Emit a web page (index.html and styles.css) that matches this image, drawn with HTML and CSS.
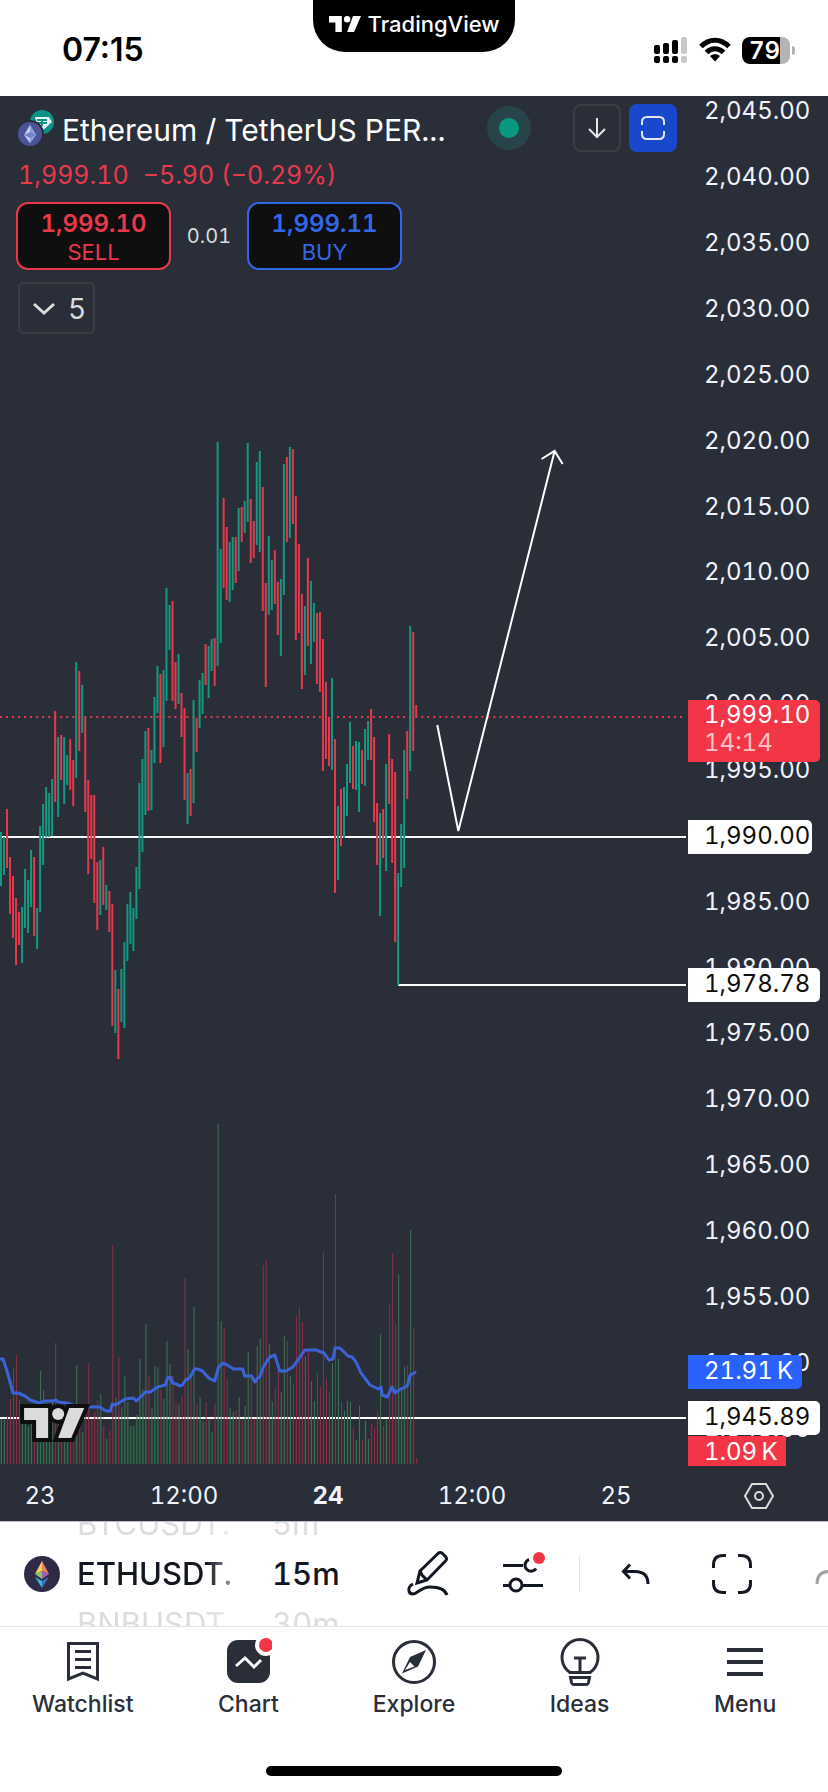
FILE: index.html
```html
<!DOCTYPE html>
<html lang="en">
<head>
    <meta charset="UTF-8">
    <meta name="viewport" content="width=device-width, initial-scale=1.0">
    <title>ETHUSDT Chart</title>
    <link rel="stylesheet" href="styles.css">
</head>
<body>

    <header class="status-bar">
        <span class="clock">07:15</span>
        <div class="island">
            <svg width="32" height="16" viewBox="0 0 60 30"><path d="M0 0h24v30H12V12H0zM45 0h15L47 30H34z"/><circle cx="34" cy="6" r="6"/></svg>
            <span>TradingView</span>
        </div>
        <div class="status-icons">
            <svg width="34" height="28" viewBox="0 0 34 28">
                <rect x="0" y="9" width="6" height="9" rx="2"/><rect x="9" y="7" width="6" height="11" rx="2"/><rect x="18" y="4" width="6" height="14" rx="2"/>
                <rect class="dim" x="27" y="1" width="6" height="17" rx="2"/>
                <rect x="0" y="20" width="6" height="7" rx="2"/><rect x="9" y="20" width="6" height="7" rx="2"/><rect x="18" y="20" width="6" height="7" rx="2"/>
                <rect class="dim" x="27" y="20" width="6" height="7" rx="2"/>
            </svg>
            <svg width="32" height="26" viewBox="0 0 32 26">
                <path class="wave" d="M2 9.500C10 1 22 1 30 9.500M7.500 15.500C12 10.500 20 10.500 24.500 15.500"/>
                <path d="M16 24.500l-5-5.500c3-2.500 7-2.500 10 0z"/>
            </svg>
            <div class="battery"><span>79</span></div>
        </div>
    </header>

    <main class="chart">
        <div class="plot">
            <svg class="plot-svg" viewBox="0 0 684 1370" preserveAspectRatio="none">
                <g class="levels">
                    <path d="M0 741H684M397 889H684M0 1322H684"/>
                </g>
                <g id="volume"></g>
                <polyline class="volume-ma" points="0,1263 3,1263 7,1275 13,1297 18,1297 25,1300 30,1304 39,1307 45,1305 53,1305 56,1304 58,1306 67,1307 72,1309 87,1311 99,1311 106,1315 110,1315 112,1308 115,1309 125,1303 133,1302 136,1305 145,1296 150,1296 157,1291 165,1289 167,1282 170,1281 172,1287 176,1288 179,1290 182,1289 185,1284 189,1282 194,1273 197,1273 202,1275 208,1282 214,1285 218,1271 223,1267 233,1273 242,1273 244,1280 251,1280 254,1286 257,1282 259,1281 263,1270 269,1261 274,1259 279,1275 285,1275 292,1271 295,1267 304,1254 315,1254 323,1257 328,1264 332,1263 334,1252 339,1252 347,1260 351,1261 355,1266 360,1277 369,1289 377,1293 380,1291 381,1299 386,1301 391,1291 394,1297 398,1294 406,1290 409,1279 415,1276"/>
                <path class="last-price" d="M0 621H684"/>
                <g id="bars"></g>
                <path class="arrow" d="M436 629L457 735L553 355M540 363L553 355L561 368"/>
                <g class="watermark">
                    <path class="halo" d="M24 1312h24v30H36v-18H24zM69 1312h15l-13 30H58z"/>
                    <circle class="halo" cx="58" cy="1318" r="6"/>
                    <path d="M24 1312h24v30H36v-18H24zM69 1312h15l-13 30H58z"/>
                    <circle cx="58" cy="1318" r="6"/>
                </g>
            </svg>

            <div class="legend">
                <div class="legend-row">
                    <svg width="38" height="38" viewBox="0 0 38 38">
                        <circle cx="24" cy="13" r="12" fill="#0b9388"/>
                        <path d="M17 8h14l3 5-10 9-4-4z" fill="#e6f5f3"/><path d="M19 11h10M24 11v6M19 14h10" stroke="#0b9388" stroke-width="2" fill="none"/>
                        <circle cx="12" cy="25" r="14" fill="#2a2e39"/>
                        <circle cx="12" cy="25" r="12" fill="#4a5597"/>
                        <path d="M12 16l-6 10 6 8 6-8z" fill="#c5cef2"/><path d="M12 16v18l6-8z" fill="#8e9bd8"/><path d="M6 26l6-3 6 3-6 3z" fill="#7583c9"/>
                    </svg>
                    <h1 class="symbol">Ethereum / TetherUS PER...</h1>
                    <span class="market-open"></span>
                    <button class="square-btn" aria-label="Scroll down">
                        <svg width="24" height="24" viewBox="0 0 24 24"><path d="M12 2v19M4 13l8 8 8-8"/></svg>
                    </button>
                    <button class="square-btn active" aria-label="Auto scale">
                        <svg width="24" height="24" viewBox="0 0 24 24"><path d="M1 9V6q0-5 5-5h12q5 0 5 5v3M1 15v3q0 5 5 5h12q5 0 5-5v-3"/></svg>
                    </button>
                </div>
                <div class="quote"><span>1,999.10</span><span>−5.90 (−0.29%)</span></div>
                <div class="trade">
                    <button class="sell"><b>1,999.10</b>SELL</button>
                    <span class="spread">0.01</span>
                    <button class="buy"><b>1,999.11</b>BUY</button>
                </div>
                <button class="indicators">
                    <svg width="24" height="14" viewBox="0 0 24 14"><path d="M2 2l10 9 10-9"/></svg>
                    5
                </button>
            </div>
        </div>

        <div class="price-axis">
            <ol class="prices" id="prices"></ol>
            <div class="tag last" data-y="604">1,999.10<br><span>14:14</span></div>
            <div class="tag narrow" data-y="724">1,990.00</div>
            <div class="tag" data-y="872">1,978.78</div>
            <div class="tag ma" data-y="1259">21.91&thinsp;K</div>
            <div class="tag" data-y="1305">1,945.89</div>
            <div class="tag vol" data-y="1340">1.09&thinsp;K</div>
        </div>

        <div class="time-axis">
            <span>23</span><span>12:00</span><span class="day">24</span><span>12:00</span><span>25</span>
        </div>
        <button class="axis-settings" aria-label="Chart settings">
            <svg width="30" height="26" viewBox="0 0 30 26"><path d="M8 1h14l7 12-7 12H8L1 13z"/><circle cx="15" cy="13" r="4"/></svg>
        </button>
    </main>

    <section class="toolbar">
        <svg class="coin" width="36" height="36" viewBox="0 0 36 36">
            <circle cx="18" cy="18" r="18" fill="#2f2b47"/>
            <path d="M18 5l-7 13 7-3z" fill="#f7cf5b"/><path d="M18 5l7 13-7-3z" fill="#ee7e61"/>
            <path d="M11 18l7-3v8z" fill="#8ac46c"/><path d="M25 18l-7-3v8z" fill="#a35fb4"/>
            <path d="M11 21l7 4v7z" fill="#35b6d6"/><path d="M25 21l-7 4v7z" fill="#3a6fc8"/>
        </svg>
        <div class="wheel symbols">
            <button>BTCUSDT.</button>
            <button class="current">ETHUSDT.</button>
            <button>BNBUSDT.</button>
        </div>
        <div class="wheel intervals">
            <button>5m</button>
            <button class="current">15m</button>
            <button>30m</button>
        </div>
        <div class="tools">
            <button aria-label="Drawings">
                <svg width="48" height="48" viewBox="0 0 48 48"><path d="M16 21L34 3.500q2-2 4.500 0l3 3q2 2.500 0 4.500L23 30l-10 3zM16 21l2 4 5 5M9 34c-6 3-5 10 0 10 4 0 8-7 17-7 8 0 15 2 17 8"/></svg>
            </button>
            <button aria-label="Indicators">
                <svg width="48" height="48" viewBox="0 0 48 48"><path d="M3 15.500h20M29 9.500a6 6 0 1 0 7 9M3 35.500h7M22 35.500h21"/><circle cx="16" cy="35" r="6"/><circle class="dot" cx="39" cy="8" r="6"/></svg>
            </button>
            <span class="divider"></span>
            <button aria-label="Undo">
                <svg width="48" height="48" viewBox="0 0 48 48"><path d="M18 14.500L11.500 21.500l6.500 7M12 21.500h11c8 0 13 4 13 12.500"/></svg>
            </button>
            <button aria-label="Full screen">
                <svg width="48" height="48" viewBox="0 0 48 48"><path d="M5.500 18v-3q0-9.500 9.500-9.500h3M30 5.500h3q9.500 0 9.500 9.500v3M42.500 30v3q0 9.500-9.500 9.500h-3M18 42.500h-3q-9.500 0-9.500-9.500v-3"/></svg>
            </button>
            <button class="redo" aria-label="Redo">
                <svg width="48" height="48" viewBox="0 0 48 48"><path d="M30 14.500l6.500 7-6.500 7M36 21.500H25c-8 0-12 4-12 12.500"/></svg>
            </button>
        </div>
    </section>

    <nav class="tabs">
        <a href="#watchlist">
            <svg width="48" height="48" viewBox="0 0 48 48"><path class="line" d="M9.500 5.500h29V41L24 35 9.500 41z"/><path class="line" d="M16 13.500h16M16 21.500h16M16 29.500h16"/></svg>
            Watchlist
        </a>
        <a href="#chart">
            <svg width="48" height="48" viewBox="0 0 48 48"><rect x="3" y="2" width="43" height="43" rx="11"/><path class="zigzag" d="M12 28l9-8 9 9 7-7"/><circle class="ring" cx="42" cy="7" r="11"/><circle class="dot" cx="42" cy="7" r="7"/></svg>
            Chart
        </a>
        <a href="#explore">
            <svg width="48" height="48" viewBox="0 0 48 48"><circle class="line" cx="24" cy="24" r="20.500"/><path d="M36 12L20 19l-8 16.500 16-7zM20 24l4.500 4.500L15 32z" fill-rule="evenodd"/></svg>
            Explore
        </a>
        <a href="#ideas">
            <svg width="48" height="48" viewBox="0 0 48 48"><path class="line" d="M14 34.500a18 18 0 1 1 20 0zM14.500 39.500h19l-1 5q-.5 2-2.500 2H18q-2 0-2.500-2zM18 20h12M24 20v14"/></svg>
            Ideas
        </a>
        <a href="#menu">
            <svg width="48" height="48" viewBox="0 0 48 48"><path d="M6 10h36v4H6zM6 22h36v4H6zM6 34h36v4H6z"/></svg>
            Menu
        </a>
    </nav>
    <footer class="home"><span class="home-bar"></span></footer>

    <script src="chart.js"></script>
</body>
</html>
```
FILE: styles.css
```css
* {
    box-sizing: border-box;
}

body {
    margin: 0;
    min-height: 100vh;
    display: flex;
    flex-direction: column;
    background-color: #fff;
    color: #131722;
    font-family: Inter, "Liberation Sans", sans-serif;
    font-variant-numeric: tabular-nums;
    overflow-x: hidden;
}

button {
    font-family: inherit;
    font-variant-numeric: inherit;
    background: none;
    border: none;
    padding: 0;
    cursor: pointer;
}

svg {
    display: block;
    flex-shrink: 0;
}

/* status bar */

.status-bar {
    height: 96px;
    display: grid;
    grid-template-columns: 1fr auto 1fr;
    color: #000;
}

.clock {
    padding: 30px 0 0 62px;
    font-size: 32px;
    line-height: 40px;
    font-weight: 600;
    font-variant-numeric: normal;
}

.island {
    width: 202px;
    height: 52px;
    display: flex;
    justify-content: center;
    align-items: center;
    gap: 7px;
    padding-bottom: 4px;
    background-color: #000;
    border-radius: 0 0 32px 32px;
    color: #fff;
    fill: #fff;
    font-size: 22px;
    font-weight: 500;
}

.status-icons {
    height: 100px;
    display: flex;
    justify-content: flex-end;
    align-items: center;
    gap: 11px;
    padding-right: 38px;
}

.dim {
    fill: #c8c8c8;
}

.wave {
    fill: none;
    stroke: #000;
    stroke-width: 5px;
}

.battery {
    position: relative;
    width: 48px;
    height: 27px;
    border-radius: 8px;
    background: linear-gradient(to right, #000 38px, #b4b4b4 38px);
    color: #fff;
    font-size: 24px;
    line-height: 27px;
    font-weight: 600;
    padding-left: 7px;
}

.battery::after {
    content: "";
    position: absolute;
    right: -5px;
    top: 9px;
    width: 3px;
    height: 9px;
    border-radius: 0 3px 3px 0;
    background-color: #b4b4b4;
}

/* chart */

.chart {
    flex: 1;
    display: grid;
    grid-template-columns: 1fr 142px;
    grid-template-rows: 1fr 55px;
    background-color: #2a2e39;
    border-bottom: 1px solid #b9bcc4;
    color: #f0f3fa;
    overflow: hidden;
}

.plot {
    position: relative;
    min-height: 1000px;
    padding-right: 2px;
}

.plot-svg {
    position: absolute;
    width: calc(100% - 2px);
    height: 100%;
}

.up {
    fill: #149980;
}

.down {
    fill: #e8394c;
}

.vol-up {
    fill: #3d7656;
}

.vol-down {
    fill: #8c3146;
}

.vol-up.base {
    fill: #1f4034;
}

.vol-down.base {
    fill: #4a2335;
}

.levels {
    stroke: #fff;
    stroke-width: 2px;
}

.last-price {
    stroke: #e8394c;
    stroke-width: 2px;
    stroke-dasharray: 2 4;
}

.volume-ma {
    fill: none;
    stroke: #3a63d8;
    stroke-width: 3px;
    stroke-linejoin: round;
}

.arrow {
    fill: none;
    stroke: #fff;
    stroke-width: 2px;
}

.watermark {
    fill: #dbdbdb;
}

.halo {
    stroke: #0f0f0f;
    stroke-width: 8px;
}

.legend {
    position: relative;
    padding: 8px 9px 0 16px;
}

.legend-row {
    display: flex;
    align-items: center;
    height: 48px;
    padding-left: 2px;
}

.symbol {
    flex: 1;
    margin: 0 0 0 6px;
    padding-top: 3px;
    font-size: 30px;
    line-height: 48px;
    font-weight: 400;
    white-space: nowrap;
    color: #fff;
}

.market-open {
    width: 44px;
    height: 44px;
    margin-right: 42px;
    border: 12px solid #27444a;
    border-radius: 50%;
    background-color: #089981;
}

.square-btn {
    width: 48px;
    height: 48px;
    display: flex;
    justify-content: center;
    align-items: center;
    border: 2px solid #3c3d42;
    border-radius: 8px;
    fill: none;
    stroke: #e6e6e6;
    stroke-width: 2px;
}

.square-btn.active {
    margin-left: 8px;
    background-color: #1848cc;
    border-color: #1848cc;
}

.quote {
    display: flex;
    gap: 14px;
    padding-left: 2px;
    margin-top: 6px;
    color: #e8394c;
    font-size: 25px;
    line-height: 34px;
}

.trade {
    display: flex;
    align-items: center;
    margin-top: 10px;
}

.sell, .buy {
    width: 155px;
    height: 68px;
    padding-top: 3px;
    border: 2px solid;
    border-radius: 12px;
    background-color: #0f0f0f;
    font-size: 22px;
    line-height: 28px;
}

.sell {
    color: #e8394c;
}

.buy {
    color: #3467e6;
}

.sell b, .buy b {
    display: block;
    font-size: 24px;
    font-weight: 600;
}

.spread {
    width: 76px;
    text-align: center;
    font-size: 20px;
    color: #dbdbdb;
}

.indicators {
    display: flex;
    align-items: center;
    justify-content: center;
    gap: 12px;
    width: 77px;
    height: 52px;
    margin: 12px 0 0 2px;
    padding: 1px 0 0 5px;
    border: 2px solid #3c3d42;
    border-radius: 6px;
    color: #dbdbdb;
    font-size: 28px;
    fill: none;
    stroke: #dbdbdb;
    stroke-width: 3px;
}

.price-axis {
    position: relative;
    overflow: hidden;
    font-size: 24px;
}

.prices {
    list-style: none;
    display: flex;
    flex-direction: column;
    height: calc(100% + 13px);
    margin: -18px 0 0;
    padding: 0 0 0 16px;
}

.prices li {
    flex: 1;
    display: flex;
    align-items: center;
}

.tag {
    position: absolute;
    left: 0;
    min-width: 132px;
    padding: 0 0 2px 16px;
    border-radius: 0 5px 5px 0;
    background-color: #fff;
    color: #0f0f0f;
    line-height: 32px;
    white-space: nowrap;
}

.tag.narrow {
    min-width: 124px;
}

.tag.last {
    padding: 1px 0 5px 16px;
    line-height: 28px;
    background-color: #f23645;
    color: #fff;
}

.tag.last span {
    color: #fbc3c8;
}

.tag.ma {
    min-width: 114px;
    background-color: #2962ff;
    color: #fff;
}

.tag.vol {
    min-width: 98px;
    padding-bottom: 0;
    border-radius: 0;
    background-color: #f23645;
    color: #fff;
}

.time-axis {
    display: grid;
    grid-template-columns: repeat(5, 144px);
    align-items: center;
    justify-content: start;
    margin-left: -32px;
    padding-top: 4px;
    text-align: center;
    font-size: 24px;
}

.day {
    font-weight: 700;
}

.axis-settings {
    display: flex;
    align-items: center;
    justify-content: center;
    padding-top: 4px;
    fill: none;
    stroke: #dbdbdb;
    stroke-width: 2px;
}

/* toolbar */

.toolbar {
    display: flex;
    align-items: center;
    height: 105px;
    border-bottom: 1px solid #e0e3eb;
    padding-left: 24px;
    overflow: hidden;
}

.wheel {
    flex: none;
    display: flex;
    flex-direction: column;
    justify-content: center;
    height: 104px;
    overflow: hidden;
}

.wheel button {
    flex: none;
    height: 50px;
    text-align: left;
    font-size: 31px;
    line-height: 50px;
    color: #dcdde0;
    white-space: nowrap;
}

.wheel .current {
    color: #131722;
    font-weight: 500;
}

.symbols {
    width: 162px;
    margin-left: 17px;
    -webkit-mask-image: linear-gradient(to right, #000 130px, rgba(0, 0, 0, 0.3) 160px);
    mask-image: linear-gradient(to right, #000 130px, rgba(0, 0, 0, 0.3) 160px);
}

.intervals {
    width: 108px;
    margin-left: 33px;
}

.tools {
    flex: 1;
    min-width: 0;
    display: flex;
    align-items: center;
    fill: none;
    stroke: #131722;
    stroke-width: 3px;
}

.tools button {
    flex: 0 0 96px;
    display: flex;
    justify-content: center;
}

.divider {
    flex: none;
    width: 1px;
    height: 36px;
    margin: 0 8px 0 7px;
    background-color: #e0e3eb;
}

.redo {
    opacity: 0.4;
}

.dot {
    fill: #f23645;
    stroke: none;
}

/* bottom tabs */

.tabs {
    display: grid;
    grid-template-columns: repeat(5, 1fr);
    padding-top: 11px;
}

.tabs a {
    display: flex;
    flex-direction: column;
    align-items: center;
    gap: 6px;
    color: #2a2e39;
    fill: #2a2e39;
    font-size: 23px;
    line-height: 24px;
    font-weight: 500;
    text-decoration: none;
}

.line {
    fill: none;
    stroke: #2a2e39;
    stroke-width: 3px;
}

.zigzag {
    fill: none;
    stroke: #fff;
    stroke-width: 3px;
}

.tabs .ring {
    fill: #fff;
}

.tabs .dot {
    fill: #f23645;
}

.home {
    display: flex;
    justify-content: center;
    padding: 50px 0 16px;
}

.home-bar {
    width: 296px;
    height: 10px;
    border-radius: 5px;
    background-color: #000;
}
```
FILE: chart.js
```javascript
// One entry per 15m bar: high y, low y, volume height, direction (1 = up)
const bars = [
    [736,790,45,1],[741,779,45,1],[713,772,48,0],[761,818,65,0],[780,842,97,0],[802,869,109,0],
    [816,849,64,0],[811,867,40,1],[773,832,42,1],[784,837,38,1],[754,811,40,1],[761,840,25,0],
    [812,853,36,1],[730,816,93,1],[708,769,74,1],[691,741,62,1],[697,741,40,1],[683,740,62,1],
    [615,706,121,0],[641,721,60,1],[639,684,40,0],[641,708,45,1],[659,689,35,1],[643,694,50,0],
    [664,710,45,0],[566,682,99,1],[575,655,60,0],[589,637,32,1],[622,716,50,0],[684,778,101,0],
    [699,763,45,0],[699,807,52,0],[766,834,64,0],[764,819,70,1],[751,809,38,0],[789,814,25,1],
    [795,836,33,0],[808,930,219,0],[874,937,66,1],[893,963,107,0],[873,926,57,1],[846,932,88,1],
    [808,865,62,1],[796,848,38,1],[812,855,38,1],[771,823,49,1],[687,793,105,1],[663,756,75,1],
    [635,719,140,1],[632,715,88,0],[654,714,56,1],[601,667,98,1],[570,617,97,1],[578,667,74,0],
    [574,651,65,1],[492,605,123,1],[509,554,100,1],[505,605,88,0],[566,613,62,0],[558,608,60,1],
    [597,641,67,0],[612,704,186,0],[677,728,115,1],[673,720,86,0],[604,707,157,1],[622,656,60,0],
    [584,632,67,1],[577,618,43,1],[548,589,62,0],[550,602,44,1],[543,575,32,1],[542,590,60,0],
    [346,570,340,1],[453,547,143,1],[402,492,136,0],[431,504,85,0],[446,506,56,1],[441,494,52,1],
    [441,487,54,0],[412,475,67,1],[411,446,44,0],[405,437,58,1],[347,426,112,1],[403,467,88,0],
    [425,462,45,0],[366,449,118,1],[355,456,125,1],[391,515,199,0],[487,591,204,0],[440,519,120,1],
    [464,514,62,1],[454,508,77,0],[486,539,94,0],[483,560,72,1],[368,499,128,1],[361,446,123,0],
    [351,442,88,1],[353,428,81,0],[400,544,148,0],[448,537,157,0],[498,593,142,0],[510,579,108,1],
    [462,550,113,0],[485,568,83,1],[507,546,63,1],[517,588,91,0],[516,596,77,0],[543,675,212,0],
    [586,663,85,0],[621,670,72,0],[582,674,101,1],[643,797,270,0],[710,784,105,1],[693,750,62,0],
    [691,742,53,1],[668,720,63,1],[626,687,62,1],[650,693,36,0],[645,694,24,1],[646,716,58,1],
    [654,688,24,0],[633,690,43,1],[625,664,25,1],[613,664,40,0],[641,726,36,0],[707,769,53,0],
    [717,820,130,1],[713,762,38,0],[668,775,45,1],[638,708,160,0],[663,767,211,0],[676,846,141,0],
    [777,889,190,1],[728,791,77,1],[654,772,97,1],[635,703,99,0],[530,675,234,1],[536,655,136,0],
    [609,622,6,0]
];

const STEP = 3;
const VOLUME_BOTTOM = 1368;
const CHART_HEIGHT = 1370;

function addRect(parent, x, y, width, height, className) {
    const rect = document.createElementNS("http://www.w3.org/2000/svg", "rect");
    rect.setAttribute("x", x);
    rect.setAttribute("y", y);
    rect.setAttribute("width", width);
    rect.setAttribute("height", height);
    rect.setAttribute("class", className);
    parent.appendChild(rect);
}

const barGroup = document.getElementById("bars");
const volumeGroup = document.getElementById("volume");

bars.forEach(([high, low, volume, up], i) => {
    const x = i * STEP;
    const volClass = up ? "vol-up" : "vol-down";
    // the lower part of the volume pane is darker between the bars
    const base = Math.min(volume, 45);
    addRect(volumeGroup, x, VOLUME_BOTTOM - base, 2, base, volClass + " base");
    addRect(volumeGroup, x + 1, VOLUME_BOTTOM - volume, 1, volume, volClass);
    addRect(barGroup, x, high, 2, low - high, up ? "up" : "down");
});

// Price scale
const prices = document.getElementById("prices");
for (let price = 2045; price >= 1945; price -= 5) {
    const li = document.createElement("li");
    li.textContent = price.toLocaleString("en-US", { minimumFractionDigits: 2 });
    prices.appendChild(li);
}

document.querySelectorAll(".tag").forEach(tag => {
    tag.style.top = (tag.dataset.y / CHART_HEIGHT * 100) + "%";
});
```
